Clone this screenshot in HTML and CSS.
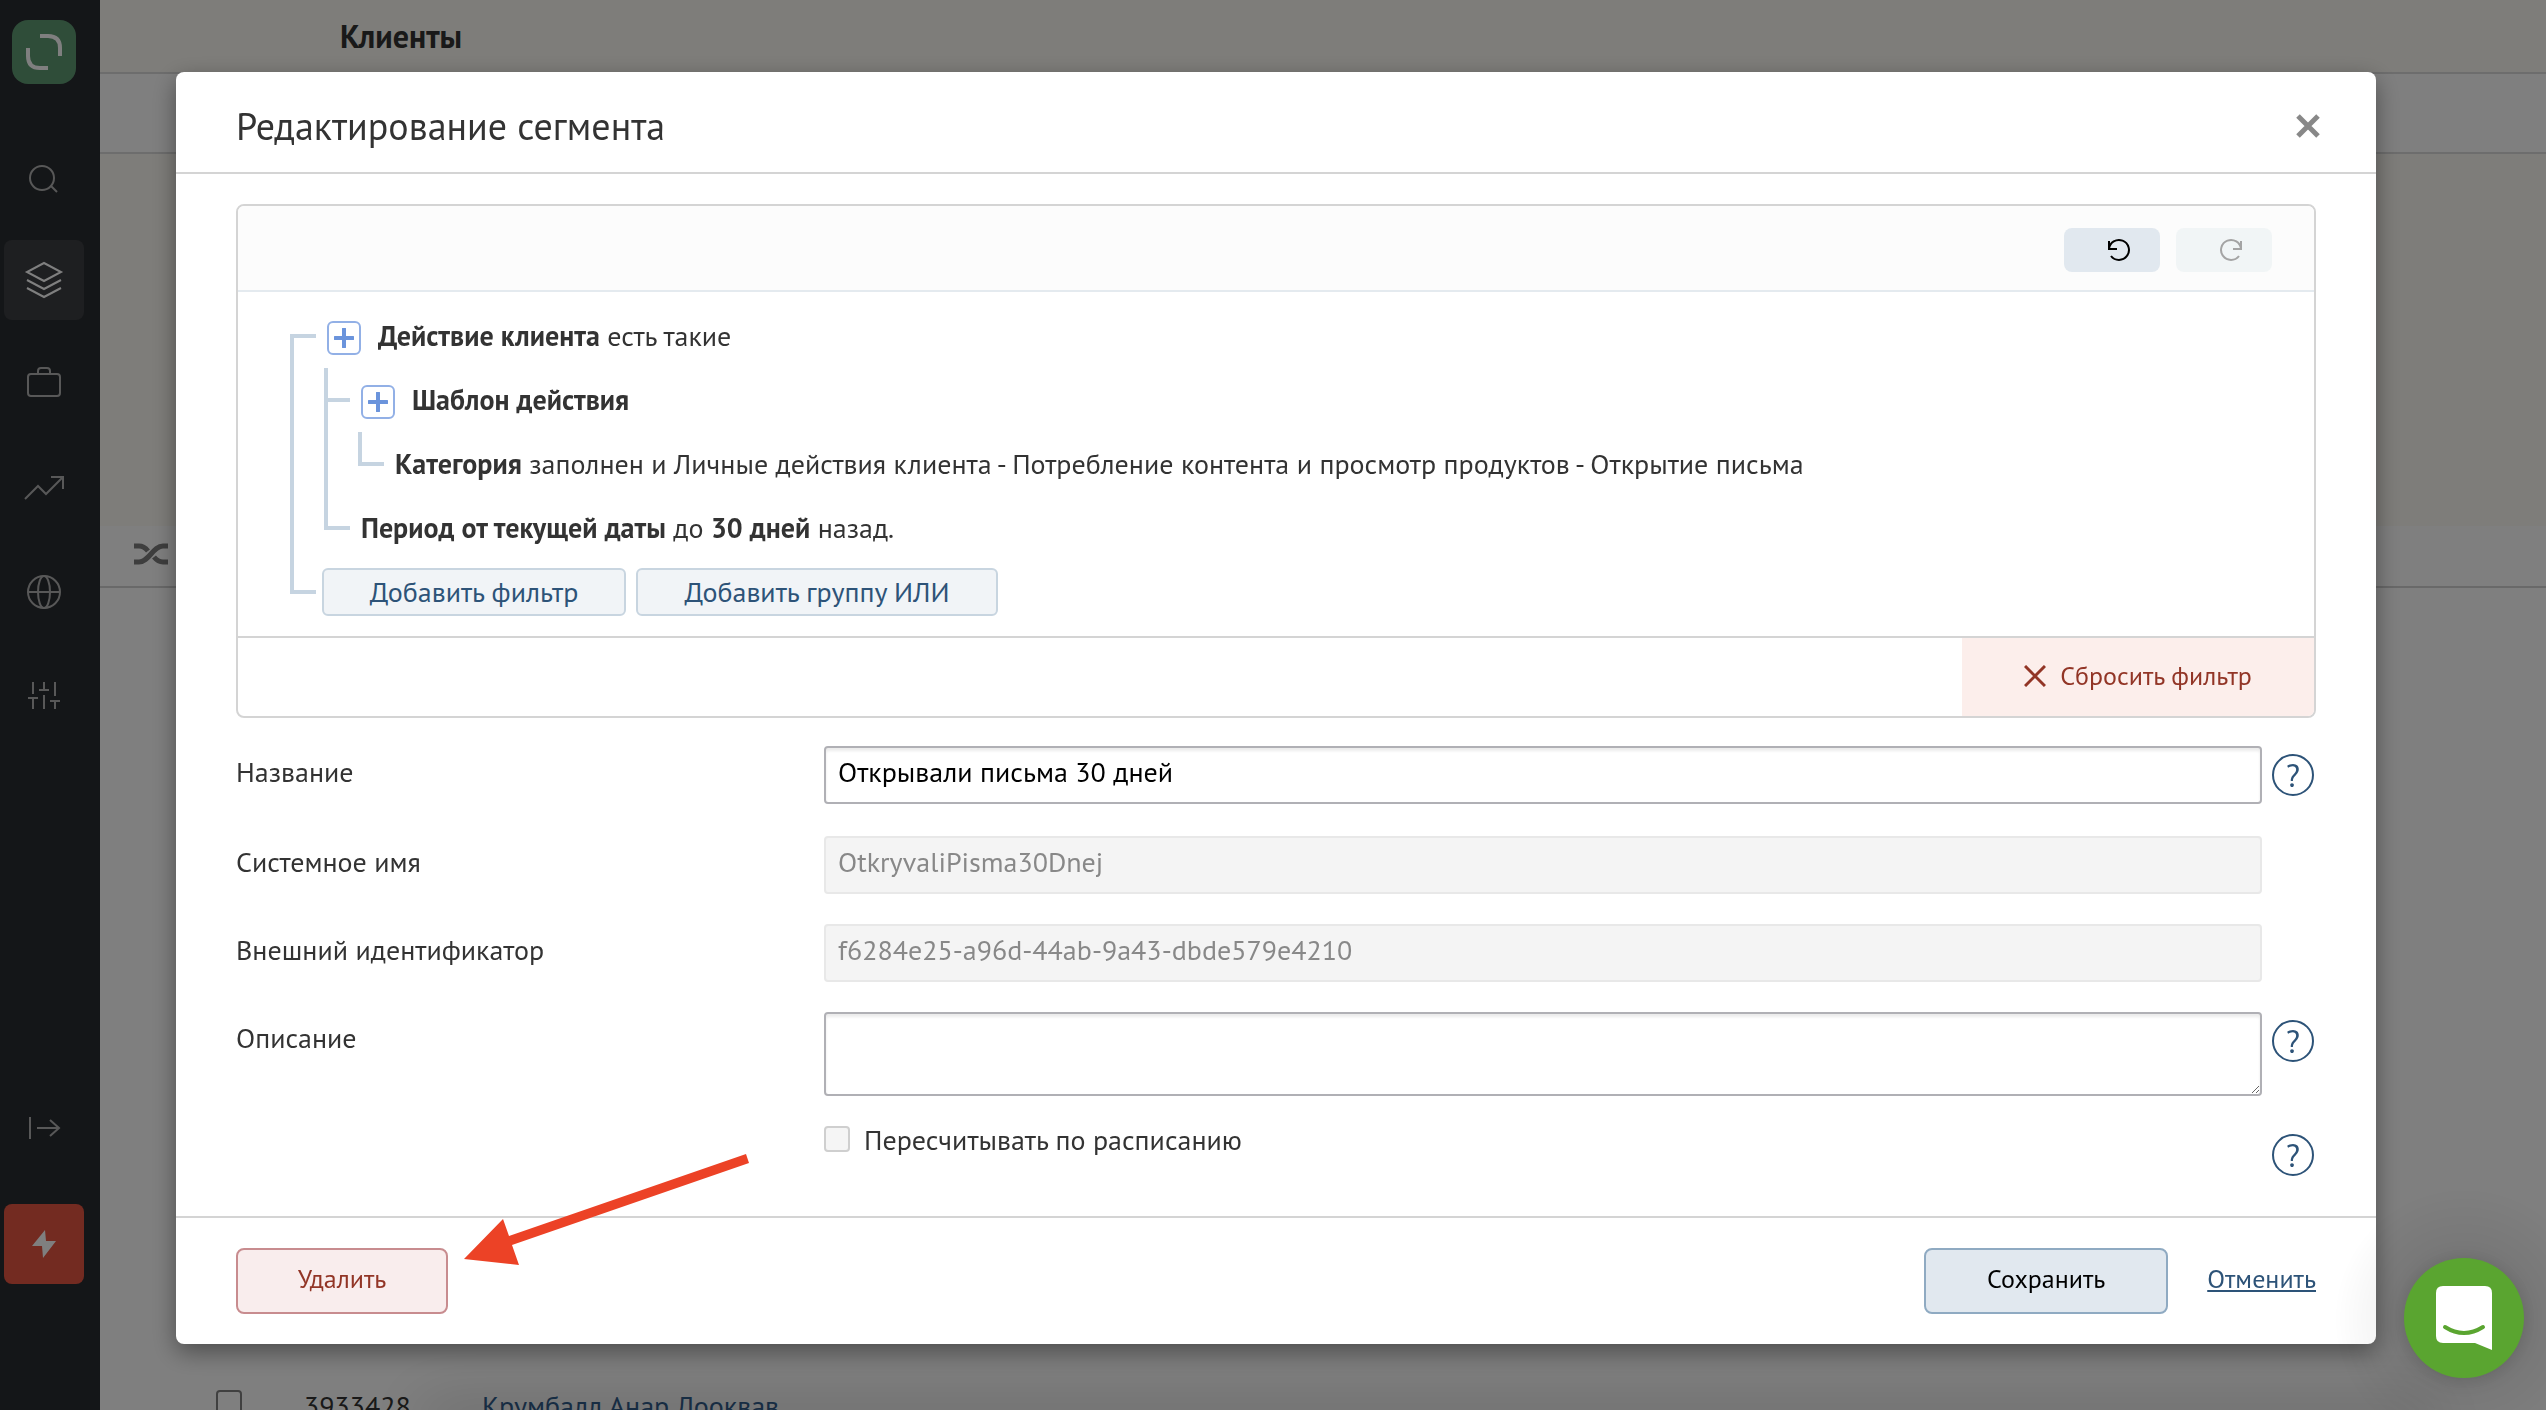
FILE: index.html
```html
<!DOCTYPE html>
<html lang="ru">
<head>
<meta charset="utf-8">
<meta name="viewport" content="width=device-width, initial-scale=1">
<title>Редактирование сегмента</title>
<link rel="stylesheet" href="styles.css">
</head>
<body>
<div class="app">
  <nav class="sidebar" aria-label="Разделы">
    <a class="logo" href="#" aria-label="Главная"><svg width="64" height="64" viewBox="0 0 64 64"><path d="M28 16h8q12 0 12 12v8M16 28v8q0 12 12 12h8" fill="none" stroke="currentColor" stroke-width="4"/></svg></a>
    <a class="nav-item" href="#" aria-label="Поиск"><svg width="40" height="40" viewBox="0 0 40 40"><circle cx="18" cy="22" r="12"/><path d="M27 30l6 6"/></svg></a>
    <a class="nav-item nav-item-active" href="#" aria-label="Клиенты"><svg width="40" height="40" viewBox="0 0 40 40"><path d="M20 3l17 9-17 9L3 12zM3 20l17 9 17-9M3 28l17 9 17-9"/></svg></a>
    <a class="nav-item" href="#" aria-label="Продукты"><svg width="40" height="40" viewBox="0 0 40 40"><rect x="4" y="10" width="32" height="22" rx="3"/><path d="M14 10V7q0-3 3-3h6q3 0 3 3v3"/></svg></a>
    <a class="nav-item" href="#" aria-label="Отчёты"><svg width="40" height="40" viewBox="0 0 40 40"><path d="M1 31l13-13 8 8 16-16M27 9h12v12"/></svg></a>
    <a class="nav-item" href="#" aria-label="Сайт"><svg width="40" height="40" viewBox="0 0 40 40"><circle cx="20" cy="20" r="16"/><ellipse cx="20" cy="20" rx="6" ry="16"/><path d="M4 20h32"/></svg></a>
    <a class="nav-item" href="#" aria-label="Настройки"><svg width="40" height="40" viewBox="0 0 40 40"><path d="M9 6v12M20 6v8M31 6v14M9 22v11M20 19v14M31 25v8M4 22h10M15 14h10M26 25h10"/></svg></a>
    <a class="nav-item nav-item-collapse" href="#" aria-label="Развернуть меню"><svg width="40" height="40" viewBox="0 0 40 40"><path d="M6 9v22M13 20h21M26 12l9 8-9 8"/></svg></a>
    <a class="nav-item nav-item-alert" href="#" aria-label="Обновления"><svg width="40" height="40" viewBox="0 0 40 40"><path d="M21 6L8 22h10l1 12 13-17H22z"/></svg></a>
  </nav>
  <main class="page">
    <header class="page-header"><h1>Клиенты</h1></header>
    <div class="page-tabs"></div>
    <div class="page-filter"></div>
    <div class="page-tools"><svg width="36" height="24" viewBox="0 0 36 24"><path d="M1 20h5c10 0 14-16 24-16h5M1 4h5q5 0 9 5M21 15q4 5 9 5h5" fill="none" stroke="currentColor" stroke-width="5"/></svg></div>
    <div class="page-list">
      <table><tbody><tr>
        <td class="cell-check"><input type="checkbox" aria-label="Выбрать клиента"></td>
        <td class="cell-id">3933428</td>
        <td><a href="#">Крумбалл Анар Лооквав</a></td>
      </tr></tbody></table>
    </div>
  </main>
</div>

<div class="overlay">
  <form class="modal" role="dialog" aria-labelledby="modal-title">
    <header class="modal-header">
      <h2 id="modal-title">Редактирование сегмента</h2>
      <button class="close" type="button" aria-label="Закрыть"><svg width="24" height="24" viewBox="0 0 24 24"><path d="M2 2l20 20M22 2L2 22" stroke="currentColor" stroke-width="5"/></svg></button>
    </header>
    <div class="modal-body">
      <section class="filter">
        <div class="filter-toolbar">
          <button class="history" type="button" aria-label="Отменить действие"><svg width="24" height="24" viewBox="0 0 24 24"><path d="M2 3v8h8M2 11a10 10 0 1 1 2 7"/></svg></button>
          <button class="history" type="button" aria-label="Повторить действие" disabled><svg width="24" height="24" viewBox="0 0 24 24"><path d="M22 3v8h-8M22 11a10 10 0 1 0-2 7"/></svg></button>
        </div>
        <div class="filter-tree">
          <ul class="tree tree-root">
            <li>
              <div class="tree-row"><button class="plus" type="button" aria-label="Добавить условие"><svg width="20" height="20" viewBox="0 0 20 20"><path d="M10 1v18M1 10h18"/></svg></button><span class="condition"><b>Действие клиента</b> есть такие</span></div>
              <ul class="tree">
                <li>
                  <div class="tree-row"><button class="plus" type="button" aria-label="Добавить условие"><svg width="20" height="20" viewBox="0 0 20 20"><path d="M10 1v18M1 10h18"/></svg></button><span class="condition"><b>Шаблон действия</b></span></div>
                  <ul class="tree">
                    <li><div class="tree-row"><span class="condition"><b>Категория</b> заполнен и Личные действия клиента - Потребление контента и просмотр продуктов - Открытие письма</span></div></li>
                  </ul>
                </li>
                <li><div class="tree-row"><span class="condition"><b>Период от текущей даты</b> до <b>30 дней</b> назад.</span></div></li>
              </ul>
            </li>
            <li><div class="tree-row tree-actions"><button class="add add-filter" type="button">Добавить фильтр</button><button class="add add-group" type="button">Добавить группу ИЛИ</button></div></li>
          </ul>
        </div>
        <div class="filter-footer">
          <button class="reset" type="button"><svg width="22" height="22" viewBox="0 0 22 22"><path d="M1 1l20 20M21 1L1 21" stroke="currentColor" stroke-width="3"/></svg>Сбросить фильтр</button>
        </div>
      </section>
      <div class="fields">
        <label for="name">Название</label>
        <input class="control" id="name" type="text" value="Открывали письма 30 дней">
        <button class="help" type="button" aria-label="Справка">?</button>

        <label for="system">Системное имя</label>
        <input class="control" id="system" type="text" value="OtkryvaliPisma30Dnej" disabled>
        <span></span>

        <label for="external">Внешний идентификатор</label>
        <input class="control" id="external" type="text" value="f6284e25-a96d-44ab-9a43-dbde579e4210" disabled>
        <span></span>

        <label for="description">Описание</label>
        <textarea class="control" id="description"></textarea>
        <button class="help" type="button" aria-label="Справка">?</button>

        <label class="schedule"><input type="checkbox">Пересчитывать по расписанию</label>
        <button class="help" type="button" aria-label="Справка">?</button>
      </div>
    </div>
    <footer class="modal-footer">
      <button class="btn btn-delete" type="button">Удалить</button>
      <button class="btn btn-save" type="submit">Сохранить</button>
      <a class="cancel" href="#">Отменить</a>
      <svg class="pointer" width="290" height="116" viewBox="0 0 290 116" aria-hidden="true"><path d="M0 107L39 67l6 17L282 2l3 9L48 93l7 20z" fill="#ec4226"/></svg>
    </footer>
  </form>
</div>

<div class="chat-shade"></div>
<button class="chat" type="button" aria-label="Открыть чат"><svg width="56" height="64" viewBox="0 0 56 64"><path d="M7 0h42q7 0 7 7v57l-17-7H7q-7 0-7-7V7q0-7 7-7z" fill="#fff"/><path d="M9 41q19 12 38 0" fill="none" stroke="#5aa530" stroke-width="4" stroke-linecap="round"/></svg></button>
</body>
</html>
```
FILE: styles.css
```css
* { box-sizing: border-box; }

body {
  margin: 0;
  height: 100vh;
  overflow: hidden;
  font: 28px/36px "PT Sans", "Noto Sans", sans-serif;
  color: #333;
}

h1, h2, ul { margin: 0; padding: 0; }
button, input, textarea { font: inherit; }
button { cursor: pointer; }

/* Page behind the dialog */
.app { display: flex; height: 100vh; }

.sidebar {
  display: flex;
  flex-direction: column;
  flex: none;
  gap: 24px;
  width: 100px;
  padding: 20px 4px 126px;
  background: #282c30;
}
.logo {
  width: 64px;
  height: 64px;
  margin: 0 8px 28px;
  border-radius: 16px;
  background: #5e9a72;
  color: #fff;
}
.nav-item {
  display: flex;
  flex: none;
  align-items: center;
  justify-content: center;
  width: 80px;
  height: 80px;
  border-radius: 8px;
  color: #b0b0b0;
}
.nav-item svg { fill: none; stroke: currentColor; stroke-width: 2; }
.nav-item-active { background: #3c3e42; color: #fff; }
.nav-item-collapse { margin-top: auto; margin-bottom: 12px; }
.nav-item-alert { background: #e65642; color: #fff; }
.nav-item-alert svg { fill: currentColor; stroke: none; }

.page {
  position: relative;
  display: flex;
  flex-direction: column;
  flex: 1;
  background: #fff;
  overflow: hidden;
}
.page::after {
  content: "";
  position: absolute;
  left: 320px;
  right: 110px;
  bottom: -20px;
  height: 20px;
  box-shadow: 0 0 60px rgba(0, 0, 0, .3);
}
.page-header {
  display: flex;
  align-items: center;
  height: 74px;
  padding-left: 240px;
  border-bottom: 2px solid #dadada;
  background: #fcfbf4;
}
.page-header h1 { font-size: 32px; line-height: 40px; }
.page-tabs { height: 80px; border-bottom: 2px solid #dadada; }
.page-filter { height: 372px; background: #fcfbf4; }
.page-tools {
  height: 62px;
  padding: 12px 33px;
  border-bottom: 2px solid #d2d2d2;
  color: #7c7c7c;
}
.page-list { flex: 1; padding: 800px 0 0 116px; overflow: hidden; }
.page-list table { border-collapse: collapse; white-space: nowrap; }
.page-list td { padding: 0; }
.page-list a { color: #336090; text-decoration: none; }
.page-list .cell-check { width: 88px; padding-top: 2px; vertical-align: top; }
.cell-id { width: 178px; }

input[type="checkbox"] {
  appearance: none;
  width: 26px;
  height: 26px;
  margin: 0;
  border: 2px solid #cfcfcf;
  border-radius: 4px;
  background: #f5f5f5;
}
.page-list input[type="checkbox"] { display: block; border-color: #808080; background: #fff; }

/* Dialog */
.overlay {
  position: fixed;
  inset: 0;
  padding: 72px 170px 0 176px;
  background: rgba(0, 0, 0, .5);
}
.modal {
  border-radius: 8px;
  background: #fff;
  box-shadow: 0 8px 24px rgba(0, 0, 0, .4);
}
.modal-header {
  display: flex;
  align-items: center;
  justify-content: space-between;
  height: 102px;
  padding: 8px 56px 0 60px;
  border-bottom: 2px solid #d4d4d4;
}
.modal-header h2 { font-size: 38px; line-height: 48px; font-weight: 400; }
.close { display: flex; padding: 0; border: 0; background: none; color: #888; }
.modal-body { padding: 30px 60px 40px; }

.filter { border: 2px solid #d4d4d4; border-radius: 8px; overflow: hidden; }
.filter-toolbar {
  display: flex;
  justify-content: flex-end;
  gap: 16px;
  padding: 22px 42px 18px;
  border-bottom: 2px solid #e4eaef;
  background: #fcfcfc;
}
.history {
  display: flex;
  align-items: center;
  justify-content: center;
  width: 96px;
  height: 44px;
  padding: 0 0 0 14px;
  border: 0;
  border-radius: 8px;
  background: #e1e8ef;
  color: #000;
}
.history svg { fill: none; stroke: currentColor; stroke-width: 2; }
.history:disabled { background: #f1f5f6; color: #a4a4a4; }

.filter-tree { padding: 14px 52px; }
.tree { list-style: none; }
.tree .tree { padding-left: 34px; }
.tree li { position: relative; }
.tree-row {
  display: flex;
  align-items: center;
  gap: 17px;
  height: 64px;
  padding-left: 37px;
}
.condition { padding-bottom: 4px; }
.tree-actions { gap: 10px; height: 60px; padding-left: 32px; }

/* Connector lines between the conditions */
.tree li::before {
  content: "";
  position: absolute;
  left: 0;
  top: -2px;
  width: 22px;
  height: 30px;
  border: solid #c6d4e1;
  border-width: 0 0 4px 4px;
}
.tree-root > li:first-child::before {
  top: 28px;
  height: calc(100% - 28px);
  border-width: 4px 0 0 4px;
}
.tree .tree > li:first-child:not(:last-child)::after {
  content: "";
  position: absolute;
  left: 0;
  top: 0;
  width: 4px;
  height: 100%;
  background: #c6d4e1;
}
.plus {
  display: flex;
  align-items: center;
  justify-content: center;
  width: 34px;
  height: 34px;
  padding: 0;
  border: 2px solid #92b0e6;
  border-radius: 6px;
  background: #fff;
}
.plus svg { fill: none; stroke: #6b94dc; stroke-width: 4; stroke-linecap: round; }
.add {
  height: 48px;
  padding: 0;
  border: 2px solid #c8d5e0;
  border-radius: 6px;
  background: #f1f4f7;
  color: #2d5378;
}
.add-filter { width: 304px; }
.add-group { width: 362px; }
.filter-footer {
  display: flex;
  justify-content: flex-end;
  height: 80px;
  border-top: 2px solid #d4d4d4;
}
.reset {
  display: flex;
  align-items: center;
  justify-content: center;
  gap: 14px;
  width: 352px;
  padding: 0 0 2px;
  border: 0;
  background: #fceeeb;
  color: #923526;
  font-size: 26px;
}

.fields {
  display: grid;
  grid-template-columns: 588px 1fr 54px;
  grid-template-rows: 60px;
  align-items: start;
  row-gap: 30px;
  padding-top: 28px;
}
.fields label { padding-top: 8px; }
.control {
  display: block;
  width: 100%;
  height: 58px;
  padding: 0 12px 8px;
  border: 2px solid #b0b0b5;
  border-radius: 4px;
  background: #fff;
  box-shadow: inset 0 3px 3px rgba(0, 0, 0, .08);
  color: #000;
}
textarea.control { height: 84px; }
.control:disabled { border-color: #e8e8e8; background: #f4f4f4; box-shadow: none; color: #888; }
.help {
  width: 42px;
  height: 42px;
  margin: 8px 0 0 10px;
  padding: 0;
  border: 2px solid #2d5378;
  border-radius: 50%;
  background: #fff;
  color: #2d5378;
  font-size: 32px;
}
.fields .schedule {
  display: flex;
  grid-column: 2;
  gap: 14px;
  padding: 0;
  line-height: 28px;
}

.modal-footer {
  position: relative;
  display: flex;
  align-items: center;
  height: 128px;
  padding: 0 60px;
  border-top: 2px solid #d4d4d4;
}
.btn {
  height: 66px;
  padding: 0 0 4px;
  border: 2px solid;
  border-radius: 8px;
  font-size: 26px;
}
.btn-delete { width: 212px; border-color: #c88c8f; background: #f9eded; color: #923526; }
.btn-save { width: 244px; margin-left: auto; border-color: #8faac2; background: #e1e8ef; color: #000; }
.cancel { margin-left: 39px; padding-bottom: 4px; color: #2d5378; font-size: 26px; }
.pointer { position: absolute; left: 288px; top: -66px; }

/* Chat launcher */
.chat-shade {
  position: fixed;
  right: 0;
  bottom: 0;
  width: 240px;
  height: 240px;
  background: radial-gradient(circle at 66% 62%, rgba(0, 0, 0, .12), rgba(0, 0, 0, 0) 60%);
  pointer-events: none;
}
.chat {
  position: fixed;
  right: 22px;
  bottom: 32px;
  display: flex;
  align-items: center;
  justify-content: center;
  width: 120px;
  height: 120px;
  padding: 0;
  border: 0;
  border-radius: 50%;
  background: #5aa530;
  box-shadow: 0 2px 16px rgba(0, 0, 0, .15);
}
```
